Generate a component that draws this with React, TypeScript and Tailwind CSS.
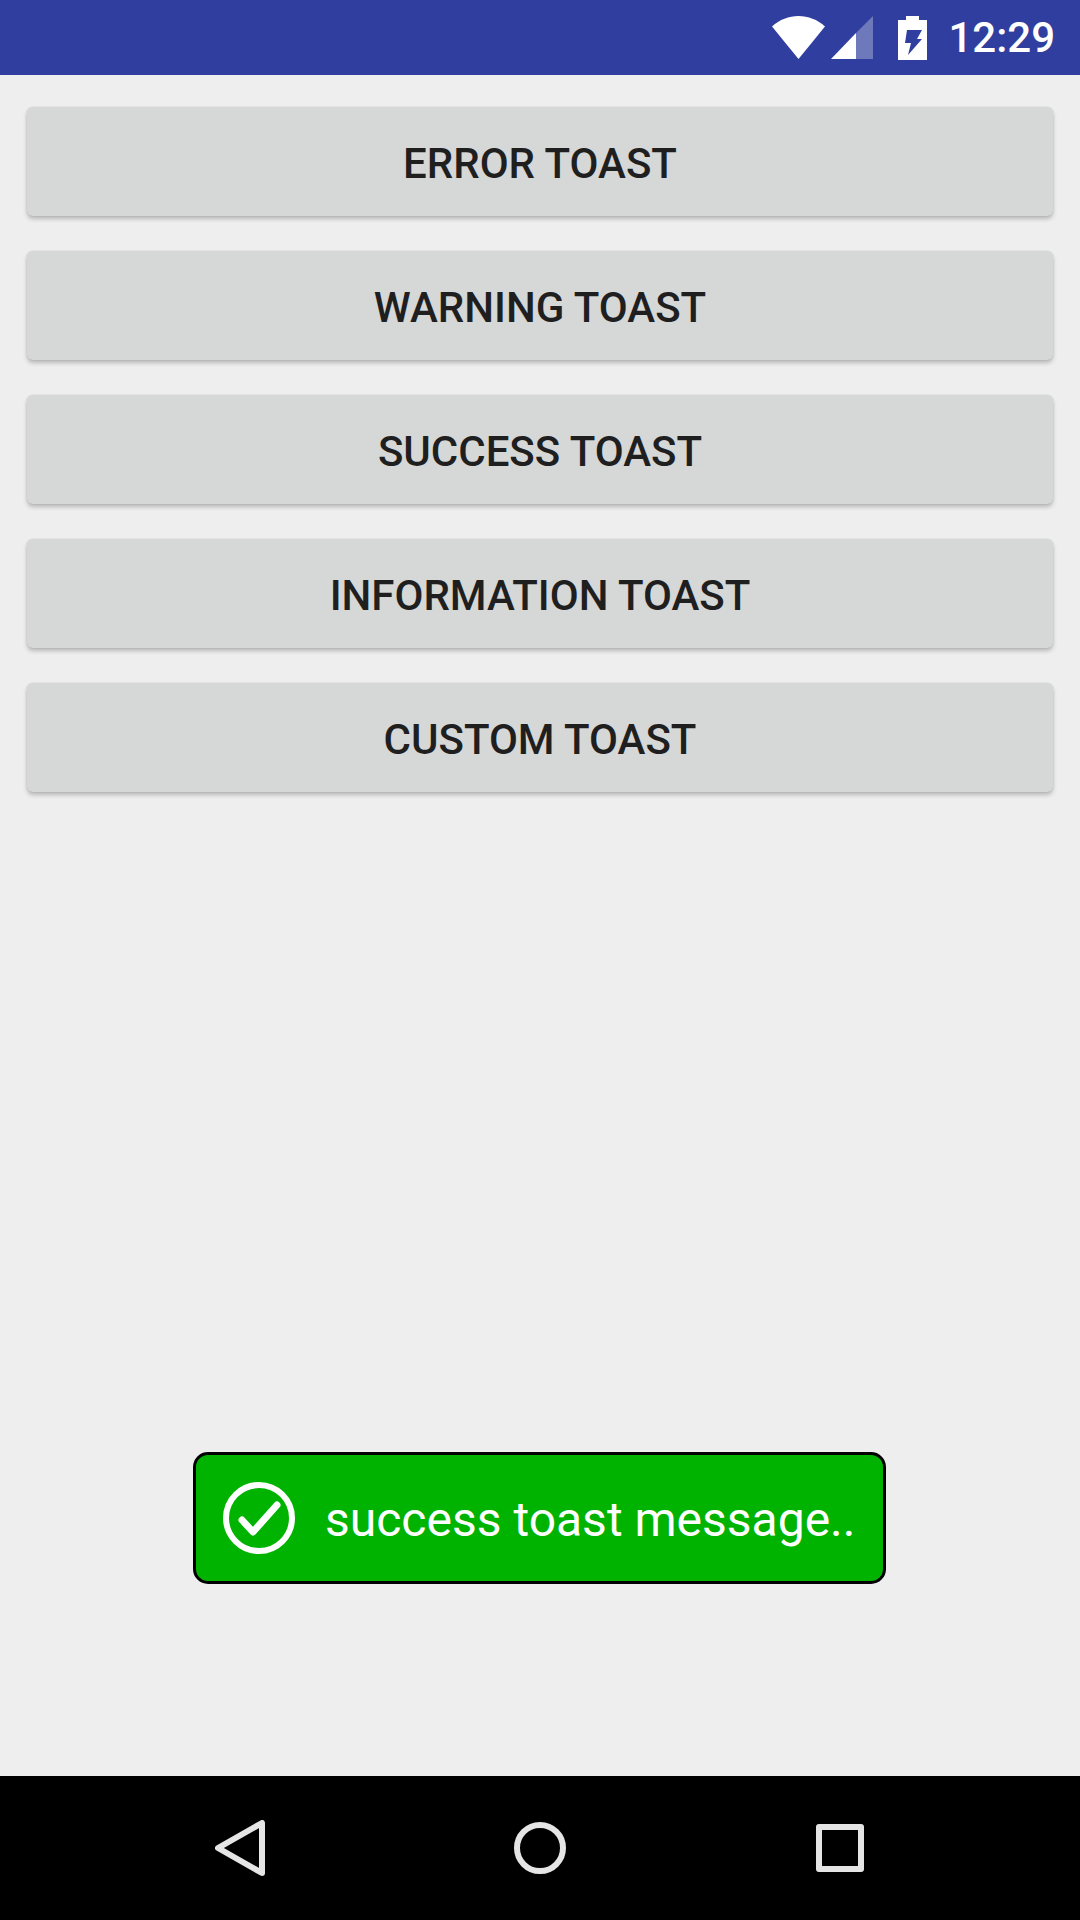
const labels = ["ERROR TOAST", "WARNING TOAST", "SUCCESS TOAST", "INFORMATION TOAST", "CUSTOM TOAST"];

export default function App() {
  return (
    <div className="relative flex h-[1920px] w-[1080px] flex-col overflow-hidden bg-[#eeeeee] font-['Roboto',sans-serif]">
      <div className="flex h-[75px] items-center justify-end bg-[#303f9f] pr-[25px]">
        <svg width="53" height="43" viewBox="0 0 53 43">
          <path d="M0 10.5 C15 -3.5 38 -3.5 53 10.5 L26.5 43 Z" fill="#fff" />
        </svg>
        <svg width="42" height="43" viewBox="0 0 42 43" className="ml-[6px]">
          <path d="M42 0 V43 H25 V17 Z" fill="#fff" fillOpacity="0.3" />
          <path d="M25 17 V43 H0 Z" fill="#fff" />
        </svg>
        <svg width="29" height="44" viewBox="0 0 29 44" className="ml-[25px]">
          <path
            fillRule="evenodd"
            d="M8 0 H21 V4 H29 V44 H0 V4 H8 Z M9 14 H24 L19 23 H24 L10 39 L13 27 H7 Z"
            fill="#fff"
          />
        </svg>
        <span className="ml-[21px] text-[42px] leading-none font-medium text-white">12:29</span>
      </div>
      <main className="flex flex-1 flex-col gap-[35px] px-[27px] pt-[32px]">
        {labels.map((l) => (
          <button
            key={l}
            className="flex h-[109px] items-center justify-center rounded-[6px] bg-[#d6d7d7] pt-[4px] text-[42px] font-medium text-[#1f1f1f] shadow-[0_3px_4px_rgba(0,0,0,0.22),0_0_2px_rgba(0,0,0,0.12)]"
          >
            {l}
          </button>
        ))}
      </main>
      <div className="absolute top-[1452px] left-[193px] flex h-[132px] w-[693px] items-center rounded-[15px] border-[3px] border-black bg-[#00b300] pl-[27px]">
        <svg width="72" height="72" viewBox="0 0 72 72" fill="none" stroke="#fff">
          <circle cx="36" cy="36" r="33" strokeWidth="6" />
          <path d="M19 38 L30 50 L54 23" strokeWidth="7" strokeLinecap="round" strokeLinejoin="round" />
        </svg>
        <span className="mt-[3px] ml-[30px] text-[48px] whitespace-nowrap text-white">success toast message..</span>
      </div>
      <div className="flex h-[144px] items-center justify-between bg-black pr-[216px] pl-[215px]">
        <svg width="50" height="56" viewBox="0 0 50 56" fill="none" stroke="#e5e5e5" strokeWidth="6" strokeLinejoin="round">
          <path d="M47 3 V53 L3 28 Z" />
        </svg>
        <svg width="52" height="52" viewBox="0 0 52 52" fill="none" stroke="#e5e5e5" strokeWidth="6" className="mr-[2px]">
          <circle cx="26" cy="26" r="23" />
        </svg>
        <svg width="48" height="48" viewBox="0 0 48 48" fill="none" stroke="#e5e5e5" strokeWidth="6" strokeLinejoin="round">
          <rect x="3" y="3" width="42" height="42" />
        </svg>
      </div>
    </div>
  );
}
